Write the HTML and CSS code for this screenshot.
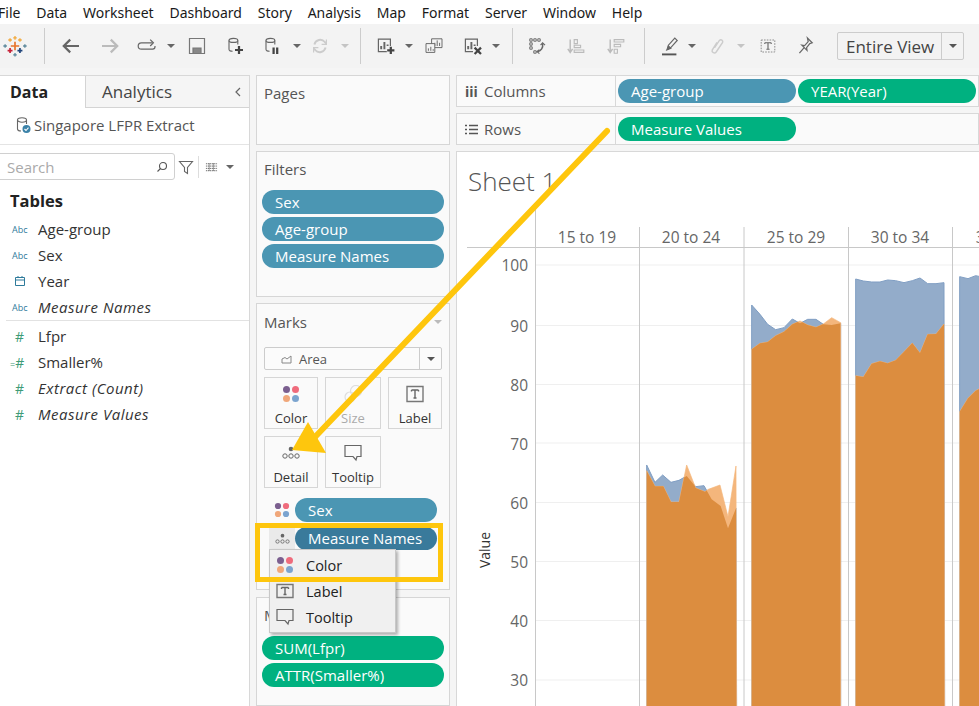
FILE: index.html
```html
<!DOCTYPE html>
<html lang="en">
<head>
<meta charset="utf-8">
<title>Tableau worksheet</title>
<link rel="stylesheet" href="styles.css">
</head>
<body>
<div class="app">
  <nav class="menubar">
    <span>File</span><span>Data</span><span>Worksheet</span><span>Dashboard</span><span>Story</span><span>Analysis</span><span>Map</span><span>Format</span><span>Server</span><span>Window</span><span>Help</span>
  </nav>

  <div class="toolbar">
    <svg class="ti g3" viewBox="-5 -5 34 34" fill="none" stroke-width="1.6">
      <path d="M12 6v12M6 12h12" stroke="#e8762d" stroke-width="2.400"/>
      <path d="M12 -2v5M9.500 .5h5M5 1v5M2.500 3.500h5M19 1v5M16.500 3.500h5" stroke="#f2a93b" stroke-width="1.800"/>
      <path d="M5 15v7M1.500 18.500h7" stroke="#c72037" stroke-width="2.400"/>
      <path d="M19 15v7M15.500 18.500h7" stroke="#1f447a" stroke-width="2.400"/>
      <path d="M-2 9.500v5M-4.500 12h5M26 9.500v5M23.500 12h5" stroke="#5b879b" stroke-width="1.800"/>
      <path d="M12 22v5M9.500 24.500h5" stroke="#59879b" stroke-width="1.800"/>
    </svg>
    <i class="sep g17"></i>
    <svg class="ti g14" viewBox="-3 -3 30 30" fill="none" stroke="#666" stroke-width="2.800"><path d="M22 12H3M11 4l-8 8 8 8"/></svg>
    <svg class="ti g15" viewBox="-3 -3 30 30" fill="none" stroke="#bbb" stroke-width="2.800"><path d="M2 12h19M13 4l8 8-8 8"/></svg>
    <svg class="ti g13" viewBox="-3 -3 30 30" fill="none" stroke="#666" stroke-width="1.500"><path d="M19 8H5a3 3 0 0 0 0 8h14a3 3 0 0 0 3-3v-1"/><path d="M16 4l4 4-4 4" /></svg>
    <i class="caret g8"></i>
    <svg class="ti g10" viewBox="0 0 24 24" fill="none" stroke="#777" stroke-width="1.200"><path d="M4.500 4.500h15v15h-15z"/><path d="M8 19v-5h8v5" fill="#888"/></svg>
    <svg class="ti g14" viewBox="-3 -3 30 30" fill="none" stroke="#666" stroke-width="1.400"><ellipse cx="10" cy="5" rx="5.500" ry="2.500"/><path d="M4.500 5v11c0 1.500 2 2.500 4.500 2.500M15.500 5v5"/><path d="M17 12v10M12 17h10" stroke="#444" stroke-width="2.800"/></svg>
    <svg class="ti g13" viewBox="-3 -3 30 30" fill="none" stroke="#666" stroke-width="1.400"><ellipse cx="10" cy="5" rx="5.500" ry="2.500"/><path d="M4.500 5v11c0 1.500 2 2.500 4.500 2.500M15.500 5v5"/><path d="M14 14v8M18.500 14v8" stroke="#444" stroke-width="2.800"/></svg>
    <i class="caret g9"></i>
    <svg class="ti g7" viewBox="-3 -3 30 30" fill="none" stroke="#ccc" stroke-width="2.400"><path d="M5 10a7.500 7.500 0 0 1 13-3l2 2M19 14a7.500 7.500 0 0 1-13 3l-2-2"/><path d="M20 4v6h-6M4 20v-6h6" stroke-width="1.500"/></svg>
    <i class="caret caret-off g9"></i>
    <i class="sep g11"></i>
    <svg class="ti g13" viewBox="-3 -3 30 30" fill="none" stroke="#666" stroke-width="1.500"><path d="M13 19H2.500V3.500h15V12"/><path d="M6 16v-4M10 16V7M14 12v-2" stroke-width="2.400"/><path d="M18 13v9M13.500 17.500h9" stroke="#444" stroke-width="2.800"/></svg>
    <i class="caret g7"></i>
    <svg class="ti g9" viewBox="-3 -3 30 30" fill="none" stroke="#666" stroke-width="1.200"><path d="M9 3h13v11H9z" fill="#f3f3f3"/><path d="M13 12V8M16 12V5M19 12V8" /><path d="M2 9h11v11H2z" fill="#f3f3f3"/><path d="M5 18v-3M8 18v-5M11 18v-2"/></svg>
    <svg class="ti g15" viewBox="-3 -3 30 30" fill="none" stroke="#666" stroke-width="1.500"><path d="M12 19H2.500V3.500h15V12"/><path d="M6 16v-4M10 16V7M14 12v-2" stroke-width="2.400"/><path d="M14 14l8 8M22 14l-8 8" stroke="#444" stroke-width="2.800"/></svg>
    <i class="caret g7"></i>
    <i class="sep g12"></i>
    <svg class="ti g12" viewBox="-3 -3 30 30" fill="none" stroke="#666" stroke-width="1.200"><path d="M3 3h3v3H3zM8 3h3v3H8zM13 3h3v3h-3zM3 8h3v3H3zM3 13h3v3H3zM8 18h3v3H8z"/><path d="M19 9c1 5-2 9-6 10" stroke-width="1.800"/><path d="M16.500 11l2.500-3 3 3M15 16.500L12 19l3 2.500" stroke-width="1.500"/></svg>
    <svg class="ti g14" viewBox="-3 -3 30 30" fill="none" stroke="#bbb" stroke-width="1.400"><path d="M6 4v15M3 15.500L6 20l3-4.500" stroke-width="1.800"/><path d="M11 4h4v5h-4zM11 11h8v3h-8zM11 17h12v3H11z"/></svg>
    <svg class="ti g16" viewBox="-3 -3 30 30" fill="none" stroke="#bbb" stroke-width="1.400"><path d="M6 4v15M3 15.500L6 20l3-4.500" stroke-width="1.800"/><path d="M11 4h12v3H11zM11 10h8v3h-8zM11 16h4v5h-4z"/></svg>
    <i class="sep g17"></i>
    <svg class="ti g13" viewBox="-3 -3 30 30" fill="none" stroke="#666" stroke-width="1.500"><path d="M9 16l1-5 8-9 3 3-8 9z"/><path d="M8 17l2-5 3 3z" fill="#666"/><path d="M2 22.500h18" stroke="#555" stroke-width="2.400"/></svg>
    <i class="caret g6"></i>
    <svg class="ti g9" viewBox="-3 -3 30 30" fill="none" stroke="#ccc" stroke-width="1.800"><path d="M9 14l6-9c2-2 5 0 4 2.500l-8 12c-2 2.500-6 .5-5-2.500l6-9.500"/></svg>
    <i class="caret caret-off g8"></i>
    <svg class="ti g11" viewBox="-3 -3 30 30" fill="none" stroke="#888" stroke-width="1.200"><path d="M3.500 4.500h17v15h-17z" stroke-dasharray="2 1.500"/><path d="M8 8h8M12 8v8M10 16h4M8 8v1.500M16 8v1.500" stroke="#666" stroke-width="1.400"/></svg>
    <svg class="ti g13" viewBox="-3 -3 30 30" fill="none" stroke="#666" stroke-width="1.500"><path d="M15 2l6 6-3 1-4 5 .5 3.500L8 11l3.500.500 4.500-5z"/><path d="M11 14l-6 7"/></svg>
    <div class="viewbox g20"><span>Entire View</span><b><i class="caret caret-dark"></i></b></div>
  </div>

  <div class="workspace">
    <aside class="datapane">
      <div class="tabs">
        <div class="tab tab-on">Data</div>
        <div class="tab tab-off">Analytics<svg class="chev" viewBox="0 0 10 12" fill="none" stroke="#666" stroke-width="1.200"><path d="M7 2L3 6l4 4"/></svg></div>
      </div>
      <div class="source">
        <svg class="src-ic" viewBox="0 0 16 18" fill="none" stroke="#666" stroke-width="1.100"><ellipse cx="7" cy="4" rx="4.500" ry="2.200"/><path d="M2.500 4v9c0 1.200 1.500 2 3.500 2M11.500 4v4"/><circle cx="11.500" cy="13" r="4" fill="#3b82a8" stroke="none"/><path d="M9.500 13l1.500 1.500 2.500-2.800" stroke="#fff"/></svg>
        <span>Singapore LFPR Extract</span>
      </div>
      <div class="searchrow">
        <div class="search"><span>Search</span><svg class="mag" viewBox="0 0 12 12" fill="none" stroke="#555" stroke-width="1.100"><circle cx="7" cy="5" r="3.500"/><path d="M4.500 7.500L1.500 10.500"/></svg></div>
        <svg class="funnel" viewBox="0 0 16 16" fill="none" stroke="#666" stroke-width="1.100"><path d="M1.500 2.500h13L9.500 8.500v6l-3-2v-4z"/></svg>
        <i class="vsep"></i>
        <svg class="listic" viewBox="0 0 14 10" stroke="#666" stroke-width="1"><path d="M1 1.500h12M1 4h12M1 6.500h12M1 9h12M4.500 1v8.500M9 1v8.500" stroke-dasharray="1.500 .7"/></svg>
        <i class="caret"></i>
      </div>
      <h3 class="tables">Tables</h3>
      <ul class="fields fields-dim">
        <li><i class="abc">Abc</i>Age-group</li>
        <li><i class="abc">Abc</i>Sex</li>
        <li><i class="fic"><svg class="cal" viewBox="0 0 12 12" fill="none" stroke="#2f7b9b" stroke-width="1"><path d="M1.500 2.500h9v8h-9zM1.500 5h9M4 1v2M8 1v2"/></svg></i>Year</li>
        <li class="calc"><i class="abc">Abc</i>Measure Names</li>
      </ul>
      <ul class="fields fields-mea">
        <li><i class="hash">#</i>Lfpr</li>
        <li><i class="hash hash-eq"><small>=</small>#</i>Smaller%</li>
        <li class="calc"><i class="hash">#</i>Extract (Count)</li>
        <li class="calc"><i class="hash">#</i>Measure Values</li>
      </ul>
    </aside>

    <section class="cards">
      <div class="card card-pages"><h4>Pages</h4></div>
      <div class="card card-filters">
        <h4>Filters</h4>
        <div class="pill blue">Sex</div>
        <div class="pill blue">Age-group</div>
        <div class="pill blue">Measure Names</div>
      </div>
      <div class="card card-marks">
        <h4 class="marks-title">Marks<i class="caret caret-pale"></i></h4>
        <div class="markdrop">
          <span><svg class="areaic" viewBox="0 0 12 10" fill="none" stroke="#888" stroke-width="1"><path d="M1 9V5l3-1.500 2 1.500 4-3v7z"/></svg>Area</span>
          <b><i class="caret caret-dark"></i></b>
        </div>
        <div class="markgrid">
          <div class="mbtn">
            <svg class="dots" viewBox="0 0 18 18"><circle cx="4.500" cy="4.500" r="3.500" fill="#7b5f8f"/><circle cx="13.500" cy="4.500" r="3.500" fill="#ef6b7c"/><circle cx="4.500" cy="13.500" r="3.500" fill="#f0a77a"/><circle cx="13.500" cy="13.500" r="3.500" fill="#7ba4cf"/></svg>
            <span>Color</span>
          </div>
          <div class="mbtn mbtn-off">
            <svg class="dots" viewBox="0 0 18 18" fill="none" stroke="#ddd" stroke-width="1.200"><circle cx="6" cy="12" r="5"/><circle cx="12" cy="6" r="5.500"/></svg>
            <span>Size</span>
          </div>
          <div class="mbtn">
            <svg class="dots" viewBox="0 0 18 18" fill="none" stroke="#777" stroke-width="1.400"><path d="M1 1.500h16v15H1z"/><path d="M5.500 5h7M9 5v8M7.500 13h3M5.500 5v1.500M12.500 5v1.500" stroke="#666"/></svg>
            <span>Label</span>
          </div>
          <div class="mbtn">
            <svg class="dots" viewBox="0 0 18 18" fill="none" stroke="#666" stroke-width="1"><circle cx="9" cy="5" r="2.300" fill="#666" stroke="none"/><circle cx="3" cy="12" r="2.200"/><circle cx="9" cy="12" r="2.200"/><circle cx="15" cy="12" r="2.200"/></svg>
            <span>Detail</span>
          </div>
          <div class="mbtn">
            <svg class="dots" viewBox="0 0 18 18" fill="none" stroke="#666" stroke-width="1.200"><path d="M1 1.500h16v11h-4l-1 3.500-3-3.500H1z"/></svg>
            <span>Tooltip</span>
          </div>
        </div>
        <div class="shelfrow">
          <svg class="rowic" viewBox="0 0 18 18"><circle cx="4.500" cy="4.500" r="3.500" fill="#7b5f8f"/><circle cx="13.500" cy="4.500" r="3.500" fill="#ef6b7c"/><circle cx="4.500" cy="13.500" r="3.500" fill="#f0a77a"/><circle cx="13.500" cy="13.500" r="3.500" fill="#7ba4cf"/></svg>
          <div class="pill blue">Sex</div>
        </div>
        <div class="shelfrow shelfrow-active">
          <span class="rowbox"><svg class="rowic rowic-sm" viewBox="0 0 18 14" fill="none" stroke="#666" stroke-width="1"><circle cx="9" cy="3" r="2.200" fill="#666" stroke="none"/><circle cx="3" cy="10" r="2"/><circle cx="9" cy="10" r="2"/><circle cx="15" cy="10" r="2"/></svg></span>
          <div class="pill blue dark">Measure Names</div>
        </div>
      </div>
      <div class="card card-values">
        <h4>Measure Values</h4>
        <div class="pill green">SUM(Lfpr)</div>
        <div class="pill green">ATTR(Smaller%)</div>
      </div>
    </section>

    <main class="view">
      <div class="shelf">
        <div class="shelf-label"><span class="glyph">iii</span>Columns</div>
        <div class="pill blue">Age-group</div>
        <div class="pill green">YEAR(Year)</div>
      </div>
      <div class="shelf">
        <div class="shelf-label"><svg class="rowsic" viewBox="0 0 13 11" stroke="#555" stroke-width="1.500"><path d="M0 1.500h2M4 1.500h9M0 5.500h2M4 5.500h9M0 9.500h2M4 9.500h9"/></svg>Rows</div>
        <div class="pill green">Measure Values</div>
      </div>
      <div class="sheet">
        <h2 class="sheet-title">Sheet 1</h2>
        <svg class="chart" viewBox="456 207 523 499">
          <defs>
            <polygon id="b1" points="50,615 75,667 98,645 123,667 147,661 170,648 197,680 222,677 245,718 272,738 294,805 318,745 320,1400 50,1400"/>
            <polygon id="o1" points="50,632 75,679 100,679 123,726 147,726 170,615 197,684 225,695 235,688 270,675 294,770 318,618 320,1400 50,1400"/>
            <polygon id="b2" points="365,135 390,163 413,193 437,209 462,203 487,177 510,190 533,178 558,178 580,193 605,195 632,190 632,1400 365,1400"/>
            <polygon id="o2" points="365,268 390,250 413,246 437,227 462,215 487,193 510,183 533,195 558,202 580,192 605,173 632,188 632,1400 365,1400"/>
            <polygon id="b3" points="677,57 700,63 725,66 750,66 773,60 797,62 822,68 847,62 870,54 893,71 918,71 942,68 944,1400 677,1400"/>
            <polygon id="o3" points="677,347 700,351 725,311 750,304 773,310 797,301 822,275 847,249 870,279 893,223 918,222 942,192 944,1400 677,1400"/>
            <polygon id="b4" points="989,50 1014,56 1037,47 1060,52 1100,52 1100,1400 989,1400"/>
            <polygon id="o4" points="989,455 1014,415 1037,392 1060,380 1100,360 1100,1400 989,1400"/>
            <clipPath id="c1"><use href="#b1"/></clipPath>
            <clipPath id="c2"><use href="#b2"/></clipPath>
            <clipPath id="c3"><use href="#b3"/></clipPath>
            <clipPath id="c4"><use href="#b4"/></clipPath>
          </defs>
          <g class="grid">
            <path d="M536 265H979M536 325.500H979M536 384.500H979M536 443H979M536 502.500H979M536 561.500H979M536 620.500H979M536 680H979"/>
          </g>
          <g class="axis">
            <path d="M535.500 207V706M639.500 227V706M744 227V706M848.500 227V706M952.500 227V706M467 247.500H979"/>
          </g>
          <g class="hdr">
            <text x="587" y="243">15 to 19</text>
            <text x="691" y="243">20 to 24</text>
            <text x="796" y="243">25 to 29</text>
            <text x="900" y="243">30 to 34</text>
            <text x="1005" y="243">35 to 39</text>
          </g>
          <g class="ticks">
            <text x="528" y="271">100</text>
            <text x="528" y="332">90</text>
            <text x="528" y="391">80</text>
            <text x="528" y="450">70</text>
            <text x="528" y="509">60</text>
            <text x="528" y="568">50</text>
            <text x="528" y="627">40</text>
            <text x="528" y="686">30</text>
          </g>
          <text class="vlabel" transform="translate(490 550) rotate(-90)">Value</text>
          <g transform="translate(630 260) scale(.33333)">
            <use href="#b1" class="a-b"/><use href="#o1" class="a-o"/><use href="#o1" class="a-x" clip-path="url(#c1)"/>
            <use href="#b2" class="a-b"/><use href="#o2" class="a-o"/><use href="#o2" class="a-x" clip-path="url(#c2)"/>
            <use href="#b3" class="a-b"/><use href="#o3" class="a-o"/><use href="#o3" class="a-x" clip-path="url(#c3)"/>
            <use href="#b4" class="a-b"/><use href="#o4" class="a-o"/><use href="#o4" class="a-x" clip-path="url(#c4)"/>
          </g>
        </svg>
      </div>
    </main>
  </div>

  <div class="ctxmenu">
    <div class="ctxitem ctxitem-on"><svg class="ctxic" viewBox="0 0 18 18"><circle cx="4.500" cy="4.500" r="3.500" fill="#7b5f8f"/><circle cx="13.500" cy="4.500" r="3.500" fill="#ef6b7c"/><circle cx="4.500" cy="13.500" r="3.500" fill="#f0a77a"/><circle cx="13.500" cy="13.500" r="3.500" fill="#7ba4cf"/></svg>Color</div>
    <div class="ctxitem"><svg class="ctxic" viewBox="0 0 18 18" fill="none" stroke="#777" stroke-width="1.400"><path d="M1 2.500h16v13H1z"/><path d="M5.500 5.500h7M9 5.500v7M7.500 12.500h3M5.500 5.500V7M12.500 5.500V7" stroke="#666"/></svg>Label</div>
    <div class="ctxitem"><svg class="ctxic" viewBox="0 0 18 18" fill="none" stroke="#666" stroke-width="1.200"><path d="M1 1.500h16v11h-4l-1 3.500-3-3.500H1z"/></svg>Tooltip</div>
  </div>
  <div class="hilite"></div>
  <svg class="arrow" viewBox="0 0 979 706">
    <path d="M607 131L315 437" class="arrow-line"/>
    <polygon points="292,450 326,453 308,422" class="arrow-head"/>
  </svg>
</div>
</body>
</html>
```

FILE: styles.css
```css
* { box-sizing: border-box; }
html, body { margin: 0; padding: 0; }
body {
  width: 979px; height: 706px; overflow: hidden;
  background: #f5f5f5; color: #333;
  font-family: "Open Sans", "Noto Sans", "Liberation Sans", sans-serif;
}
.app { position: relative; width: 979px; height: 706px; overflow: hidden; display: flex; flex-direction: column; }

.menubar {
  flex: none; height: 24px; background: #fff; display: flex; gap: 15.8px;
  align-items: center; margin-left: -2px;
  font-size: 14px; color: #1a1a1a; font-family: "Noto Sans", "Open Sans", sans-serif;
}

.toolbar { flex: none; height: 44px; background: #f3f3f3; display: flex; align-items: center; }
.ti { flex: none; width: 24px; height: 24px; display: block; }
.sep { flex: none; width: 1px; height: 36px; background: #ccc; }
.caret { flex: none; display: block; width: 0; height: 0; border-left: 4px solid transparent; border-right: 4px solid transparent; border-top: 4px solid #666; }
.caret-off { border-top-color: #c4c4c4; }
.caret-dark { border-top-color: #555; }
.caret-pale { border-top-color: #bbb; }
.g3 { margin-left: 3px; } .g6 { margin-left: 6px; } .g7 { margin-left: 7px; } .g8 { margin-left: 8px; }
.g9 { margin-left: 9px; } .g10 { margin-left: 10px; } .g11 { margin-left: 11px; } .g12 { margin-left: 12px; }
.g13 { margin-left: 13px; } .g14 { margin-left: 14px; } .g15 { margin-left: 15px; } .g16 { margin-left: 16px; }
.g17 { margin-left: 17px; } .g20 { margin-left: 20px; }
.viewbox {
  flex: none; width: 127px; height: 28px; display: flex; align-items: center;
  border: 1px solid #ccc; border-radius: 2px; font-size: 17px; color: #444;
}
.viewbox span { flex: 1; padding-left: 8px; white-space: nowrap; }
.viewbox b { flex: none; width: 22px; height: 100%; border-left: 1px solid #ccc; display: flex; align-items: center; justify-content: center; }

.workspace { flex: 1; min-height: 0; display: grid; grid-template-columns: 250px 194px 523px; column-gap: 6px; padding-top: 7px; }

.datapane { background: #fff; border-right: 1px solid #d8d8d8; border-top: 1px solid #d8d8d8; }
.tabs { display: grid; grid-template-columns: 85px 1fr; height: 32px; }
.tab { display: flex; align-items: center; font-size: 16px; }
.tab-on { padding-left: 10px; font-weight: 700; color: #222; }
.tab-off { padding-left: 16px; background: #f5f5f5; border-left: 1px solid #d4d4d4; border-bottom: 1px solid #d4d4d4; color: #444; font-size: 17px; }
.chev { width: 10px; height: 12px; margin-left: auto; margin-right: 6px; }
.source { height: 37px; padding: 0 0 2px 15px; border-bottom: 1px solid #e4e4e4; display: flex; align-items: center; gap: 3px; font-size: 15px; color: #555; }
.src-ic { width: 16px; height: 18px; }
.searchrow { display: flex; align-items: center; height: 27px; margin-top: 8px; }
.search { width: 176px; height: 27px; margin-left: -1px; border: 1px solid #d0d0d0; border-radius: 0 3px 3px 0; display: flex; align-items: center; justify-content: space-between; padding: 0 6px 0 7px; font-size: 15px; color: #aaa; }
.mag { width: 12px; height: 12px; }
.funnel { width: 16px; height: 16px; margin-left: 3px; }
.vsep { width: 1px; height: 22px; background: #ddd; margin-left: 4px; }
.listic { width: 13px; height: 10px; margin-left: 6px; }
.searchrow .caret { margin-left: 8px; }
.tables { margin: 0; padding: 6px 0 0 10px; font-size: 16.5px; line-height: 30px; font-weight: 700; color: #222; }
.fields { list-style: none; margin: 0; padding: 0 0 0 6px; font-size: 15px; color: #333; }
.fields-mea { border-top: 1px solid #e2e2e2; margin-left: 6px; padding: 2px 0 0; }
.fields li { height: 26px; display: flex; align-items: center; white-space: nowrap; }
.fields .calc { font-style: italic; letter-spacing: .5px; }
.abc { width: 32px; padding-left: 6px; font-style: normal; font-size: 9px; letter-spacing: 0; color: #2f7b9b; flex: none; }
.fic { width: 32px; padding-left: 8px; font-style: normal; flex: none; display: flex; }
.cal { width: 12px; height: 12px; }
.hash { width: 32px; padding-left: 9px; font-style: normal; font-size: 14px; letter-spacing: 0; color: #3e9b77; flex: none; }
.hash-eq { padding-left: 4px; }
.hash-eq small { font-size: 9px; }

.cards { display: flex; flex-direction: column; gap: 6px; min-height: 0; width: 194px; }
.card { background: #fafafa; border: 1px solid #d6d6d6; padding: 0 5px; flex: none; }
.card h4 { margin: 0; font-size: 15px; font-weight: 400; color: #555; padding-left: 2px; height: 38px; line-height: 34px; white-space: nowrap; }
.card-pages { height: 70px; }
.card-filters { height: 146px; display: flex; flex-direction: column; }
.card-filters .pill { margin-bottom: 3px; }
.card-marks { height: 287px; }
.card h4.marks-title { display: flex; align-items: center; justify-content: space-between; padding-right: 2px; height: 36px; }
.card-values { flex: 1; margin-top: 1px; }
.card-values .pill { margin-bottom: 3px; }

.pill {
  height: 24px; border-radius: 12px; color: #fff; font-size: 15px; line-height: 24px;
  padding-left: 13px; white-space: nowrap; overflow: hidden; flex: none;
}
.blue { background: #4b96b3; }
.blue.dark { background: #397a9b; height: 23px; line-height: 22px; }
.green { background: #00b180; }

.markdrop { margin: 7px 0 0 2px; width: 178px; height: 23px; border: 1px solid #ccc; border-radius: 2px; display: flex; align-items: center; font-size: 13px; color: #555; background: #fbfbfb; }
.markdrop span { flex: 1; display: flex; align-items: center; padding-left: 16px; }
.areaic { width: 12px; height: 10px; margin-right: 6px; }
.markdrop b { flex: none; width: 22px; height: 100%; border-left: 1px solid #ccc; display: flex; align-items: center; justify-content: center; }
.markgrid { margin: 7px 0 10px 2px; display: grid; grid-template-columns: 54px 56px 54px; grid-auto-rows: 52px; gap: 7px; }
.mbtn { border: 1px solid #d6d6d6; display: flex; flex-direction: column; align-items: center; font-size: 13px; color: #333; padding-top: 7px; }
.mbtn span { margin-top: 6px; line-height: 18px; }
.mbtn-off span { color: #aaa; }
.dots { width: 18px; height: 18px; display: block; }
.shelfrow { display: flex; align-items: center; height: 24px; margin-left: 7px; width: 168px; margin-bottom: 5px; }
.shelfrow .pill { flex: 1; }
.shelfrow-active { height: 23px; }
.rowic { width: 16px; height: 16px; margin: 0 5px; flex: none; }
.rowic.rowic-sm { width: 15px; height: 12px; margin: 0; }
.rowbox { width: 26px; height: 23px; background: #eaeaea; display: flex; align-items: center; justify-content: center; flex: none; }

.view { display: flex; flex-direction: column; gap: 6px; min-height: 0; }
.shelf { flex: none; height: 32px; background: #fafafa; border: 1px solid #d8d8d8; display: flex; align-items: center; gap: 2px; font-size: 15px; }
.shelf-label { width: 159px; height: 100%; border-right: 1px solid #d8d8d8; display: flex; align-items: center; color: #555; flex: none; }
.glyph { width: 27px; padding-left: 8px; font-weight: 700; font-size: 14px; }
.rowsic { width: 13px; height: 11px; margin: 0 6px 0 8px; }
.shelf .pill { width: 178px; }
.sheet { flex: 1; min-height: 0; background: #fff; border: 1px solid #d8d8d8; border-right: 0; border-bottom: 0; display: flex; flex-direction: column; overflow: hidden; }
.sheet-title { flex: none; height: 55px; margin: 0; padding-left: 11px; font-size: 26px; line-height: 58px; font-weight: 300; color: #555; }
.chart { flex: none; width: 523px; height: 499px; display: block; margin-left: -1px; }
.grid path { fill: none; stroke: #efefef; stroke-width: 1; }
.axis path { fill: none; stroke: #c8c8c8; stroke-width: 1; }
.hdr text { font-size: 15.5px; fill: #666; text-anchor: middle; }
.ticks text { font-size: 15.5px; fill: #666; text-anchor: end; }
.vlabel { font-size: 14px; fill: #333; text-anchor: middle; }
.a-b { fill: #93acca; stroke: #7f9ec3; stroke-width: 3; }
.a-o { fill: #f4b67c; stroke: #f4b67c; stroke-width: 2; }
.a-x { fill: #dc8d3f; }

.ctxmenu { position: absolute; left: 269px; top: 549px; width: 127px; height: 84px; background: #f0f0f0; border: 1px solid #c8c8c8; box-shadow: 2px 2px 3px rgba(0,0,0,.3); font-size: 14.5px; color: #222; padding-top: 2px; }
.ctxitem { height: 26px; display: flex; align-items: center; padding-left: 6px; }
.ctxitem-on { background: #f0f0f0; }
.ctxic { width: 18px; height: 18px; margin-right: 12px; flex: none; }
.hilite { position: absolute; left: 255px; top: 523px; width: 188px; height: 59px; border: 5px solid #fec60d; }
.arrow { position: absolute; left: 0; top: 0; width: 979px; height: 706px; pointer-events: none; }
.arrow-line { fill: none; stroke: #fec60d; stroke-width: 6; stroke-linecap: round; }
.arrow-head { fill: #fec60d; }
```
